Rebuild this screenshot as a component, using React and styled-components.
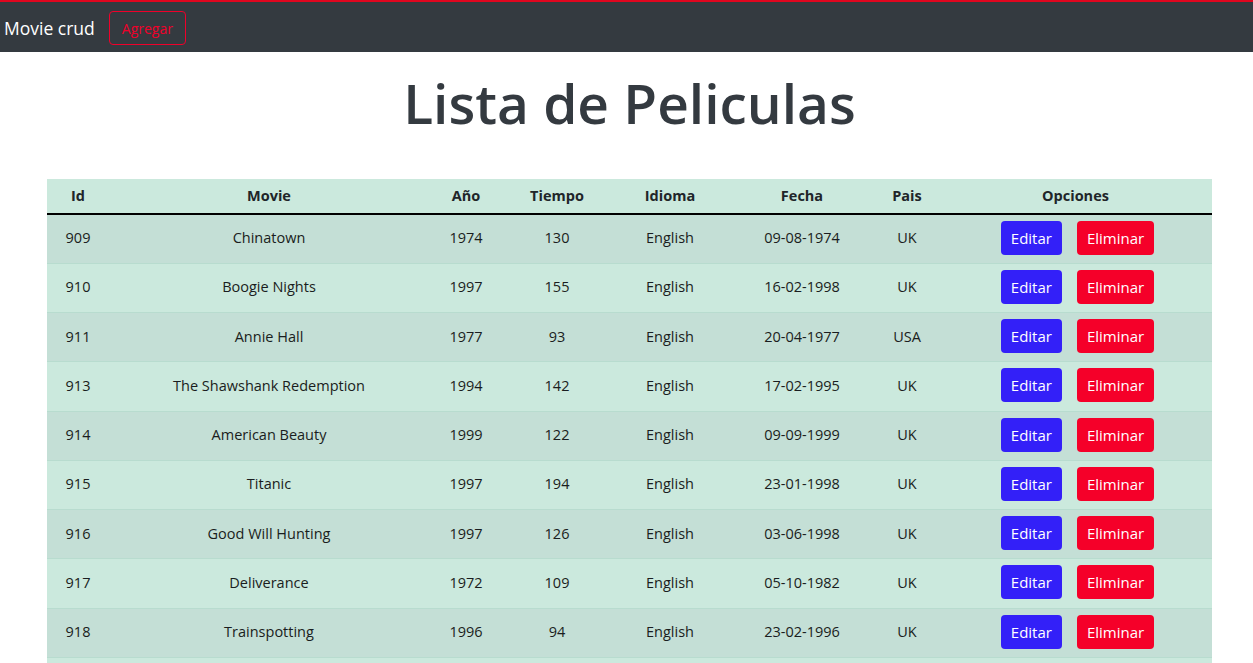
import React from "react";
import styled, { createGlobalStyle } from "styled-components";

const GlobalStyle = createGlobalStyle`
  body {
    margin: 0;
    font-family: 'Open Sans', 'Noto Sans', sans-serif;
    color: #212529;
    background: #fff;
  }
`;

const movies = [
  { id: 909, name: "Chinatown", year: 1974, time: 130, lang: "English", date: "09-08-1974", country: "UK" },
  { id: 910, name: "Boogie Nights", year: 1997, time: 155, lang: "English", date: "16-02-1998", country: "UK" },
  { id: 911, name: "Annie Hall", year: 1977, time: 93, lang: "English", date: "20-04-1977", country: "USA" },
  { id: 913, name: "The Shawshank Redemption", year: 1994, time: 142, lang: "English", date: "17-02-1995", country: "UK" },
  { id: 914, name: "American Beauty", year: 1999, time: 122, lang: "English", date: "09-09-1999", country: "UK" },
  { id: 915, name: "Titanic", year: 1997, time: 194, lang: "English", date: "23-01-1998", country: "UK" },
  { id: 916, name: "Good Will Hunting", year: 1997, time: 126, lang: "English", date: "03-06-1998", country: "UK" },
  { id: 917, name: "Deliverance", year: 1972, time: 109, lang: "English", date: "05-10-1982", country: "UK" },
  { id: 918, name: "Trainspotting", year: 1996, time: 94, lang: "English", date: "23-02-1996", country: "UK" },
  { id: 919, name: "Fargo", year: 1996, time: 98, lang: "English", date: "08-03-1996", country: "USA" },
];

const columns = [
  { label: "Id", width: 62 },
  { label: "Movie", width: 320 },
  { label: "Año", width: 74 },
  { label: "Tiempo", width: 108 },
  { label: "Idioma", width: 118 },
  { label: "Fecha", width: 146 },
  { label: "Pais", width: 64 },
  { label: "Opciones", width: 273 },
];

const Navbar = styled.nav`
  display: flex;
  align-items: center;
  gap: 14px;
  height: 50px;
  padding: 0 4px;
  background: #343a40;
  border-top: 2px solid #e0061f;
`;

const Brand = styled.a`
  color: #fff;
  font-size: 17.5px;
  text-decoration: none;
  margin-top: 2px;
`;

const OutlineButton = styled.button`
  height: 34px;
  padding: 0 12px;
  background: transparent;
  border: 1px solid #f0002a;
  border-radius: 4px;
  color: #f0002a;
  font-family: inherit;
  font-size: 14px;
  margin-top: 2px;
`;

const Title = styled.h1`
  margin: 0;
  padding: 15px 0 40px 6px;
  text-align: center;
  font-size: 55px;
  font-weight: 600;
  line-height: 72px;
  color: #343a40;
`;

const Wrapper = styled.div`
  padding-left: 47px;
`;

const Table = styled.table`
  width: 1165px;
  table-layout: fixed;
  border-collapse: collapse;
  font-size: 14.5px;
  background: #cbe9dd;
`;

const Th = styled.th`
  height: 35px;
  padding: 0 8px 2px;
  text-align: center;
  font-weight: 700;
  border-bottom: 2px solid #000;
  box-sizing: border-box;
`;

const Row = styled.tr`
  background: ${(p) => (p.$odd ? "#c4dfd6" : "#cbe9dd")};
  border-bottom: 1px solid #b8dccf;
`;

const Td = styled.td`
  height: 49.25px;
  padding: 0 8px 2px;
  text-align: center;
  box-sizing: border-box;
  color: #1a1d20;
`;

const Actions = styled.div`
  display: flex;
  justify-content: center;
  gap: 15px;
  padding-left: 4px;
`;

const ActionButton = styled.button`
  height: 34px;
  padding: 0 10px;
  border: none;
  border-radius: 4px;
  color: #fff;
  font-family: inherit;
  font-size: 15px;
  background: ${(p) => (p.$danger ? "#f50029" : "#3320f8")};
`;

export default function App() {
  return (
    <>
      <GlobalStyle />
      <Navbar>
        <Brand href="#">Movie crud</Brand>
        <OutlineButton>Agregar</OutlineButton>
      </Navbar>
      <Title>Lista de Peliculas</Title>
      <Wrapper>
        <Table>
          <colgroup>
            {columns.map((c) => (
              <col key={c.label} style={{ width: c.width }} />
            ))}
          </colgroup>
          <thead>
            <tr>
              {columns.map((c) => (
                <Th key={c.label}>{c.label}</Th>
              ))}
            </tr>
          </thead>
          <tbody>
            {movies.map((m, i) => (
              <Row key={m.id} $odd={i % 2 === 0}>
                <Td>{m.id}</Td>
                <Td>{m.name}</Td>
                <Td>{m.year}</Td>
                <Td>{m.time}</Td>
                <Td>{m.lang}</Td>
                <Td>{m.date}</Td>
                <Td>{m.country}</Td>
                <Td>
                  <Actions>
                    <ActionButton>Editar</ActionButton>
                    <ActionButton $danger>Eliminar</ActionButton>
                  </Actions>
                </Td>
              </Row>
            ))}
          </tbody>
        </Table>
      </Wrapper>
    </>
  );
}
